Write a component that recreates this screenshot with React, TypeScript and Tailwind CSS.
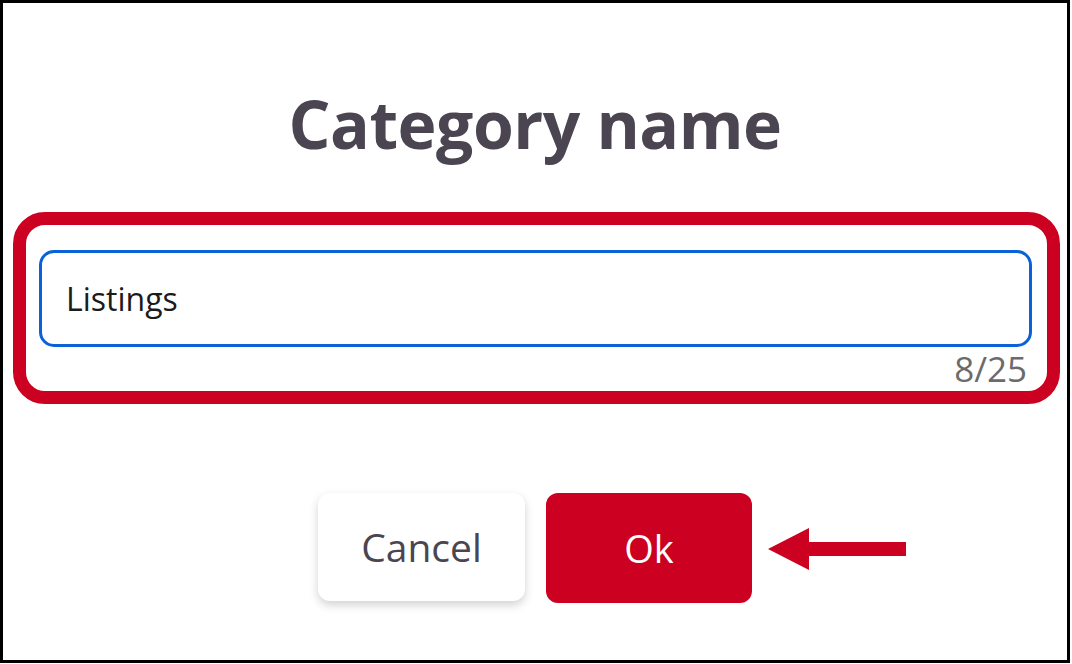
import React from 'react';

const ArrowLeft: React.FC = () => (
  <svg width="138" height="42" viewBox="0 0 138 42" className="block">
    <polygon points="0,21 41,0 41,14 138,14 138,28 41,28 41,42" fill="#cc0020" />
  </svg>
);

export default function App() {
  return (
    <div className="w-[1072px] h-[664px] bg-white" style={{ fontFamily: '"Open Sans", "Noto Sans", sans-serif' }}>
      <div className="w-[1070px] h-[663px] border-[3px] border-black flex flex-col">
        <h1 className="mt-[87px] text-center text-[66px] leading-none font-bold text-[#4a4550] tracking-[-0.5px]">
          Category name
        </h1>

        <div className="mt-[56px] ml-[10px] w-[1047px] h-[192px] rounded-[32px] border-[13px] border-[#cc0020] pl-[13px] pr-[15px] pt-[25px]">
          <div className="h-[97px] rounded-[15px] border-[3px] border-[#0b62d8] flex items-center px-[24px]">
            <span className="text-[32px] text-[#1b1b1b]">Listings</span>
          </div>
          <div className="text-right text-[35px] leading-none mt-[4px] pr-[5px] text-[#6b6b6b]">8/25</div>
        </div>

        <div className="mt-[89px] flex justify-center">
          <div className="relative flex gap-[21px]">
            <button className="w-[207px] h-[108px] rounded-[12px] bg-white shadow-[0_4px_10px_rgba(0,0,0,0.18)] text-[39px] text-[#4a4550]">
              Cancel
            </button>
            <button className="w-[206px] h-[110px] rounded-[12px] bg-[#cc0020] text-[38px] text-white">
              Ok
            </button>
            <div className="absolute left-[calc(100%+16px)] top-[35px]">
              <ArrowLeft />
            </div>
          </div>
        </div>
      </div>
    </div>
  );
}
